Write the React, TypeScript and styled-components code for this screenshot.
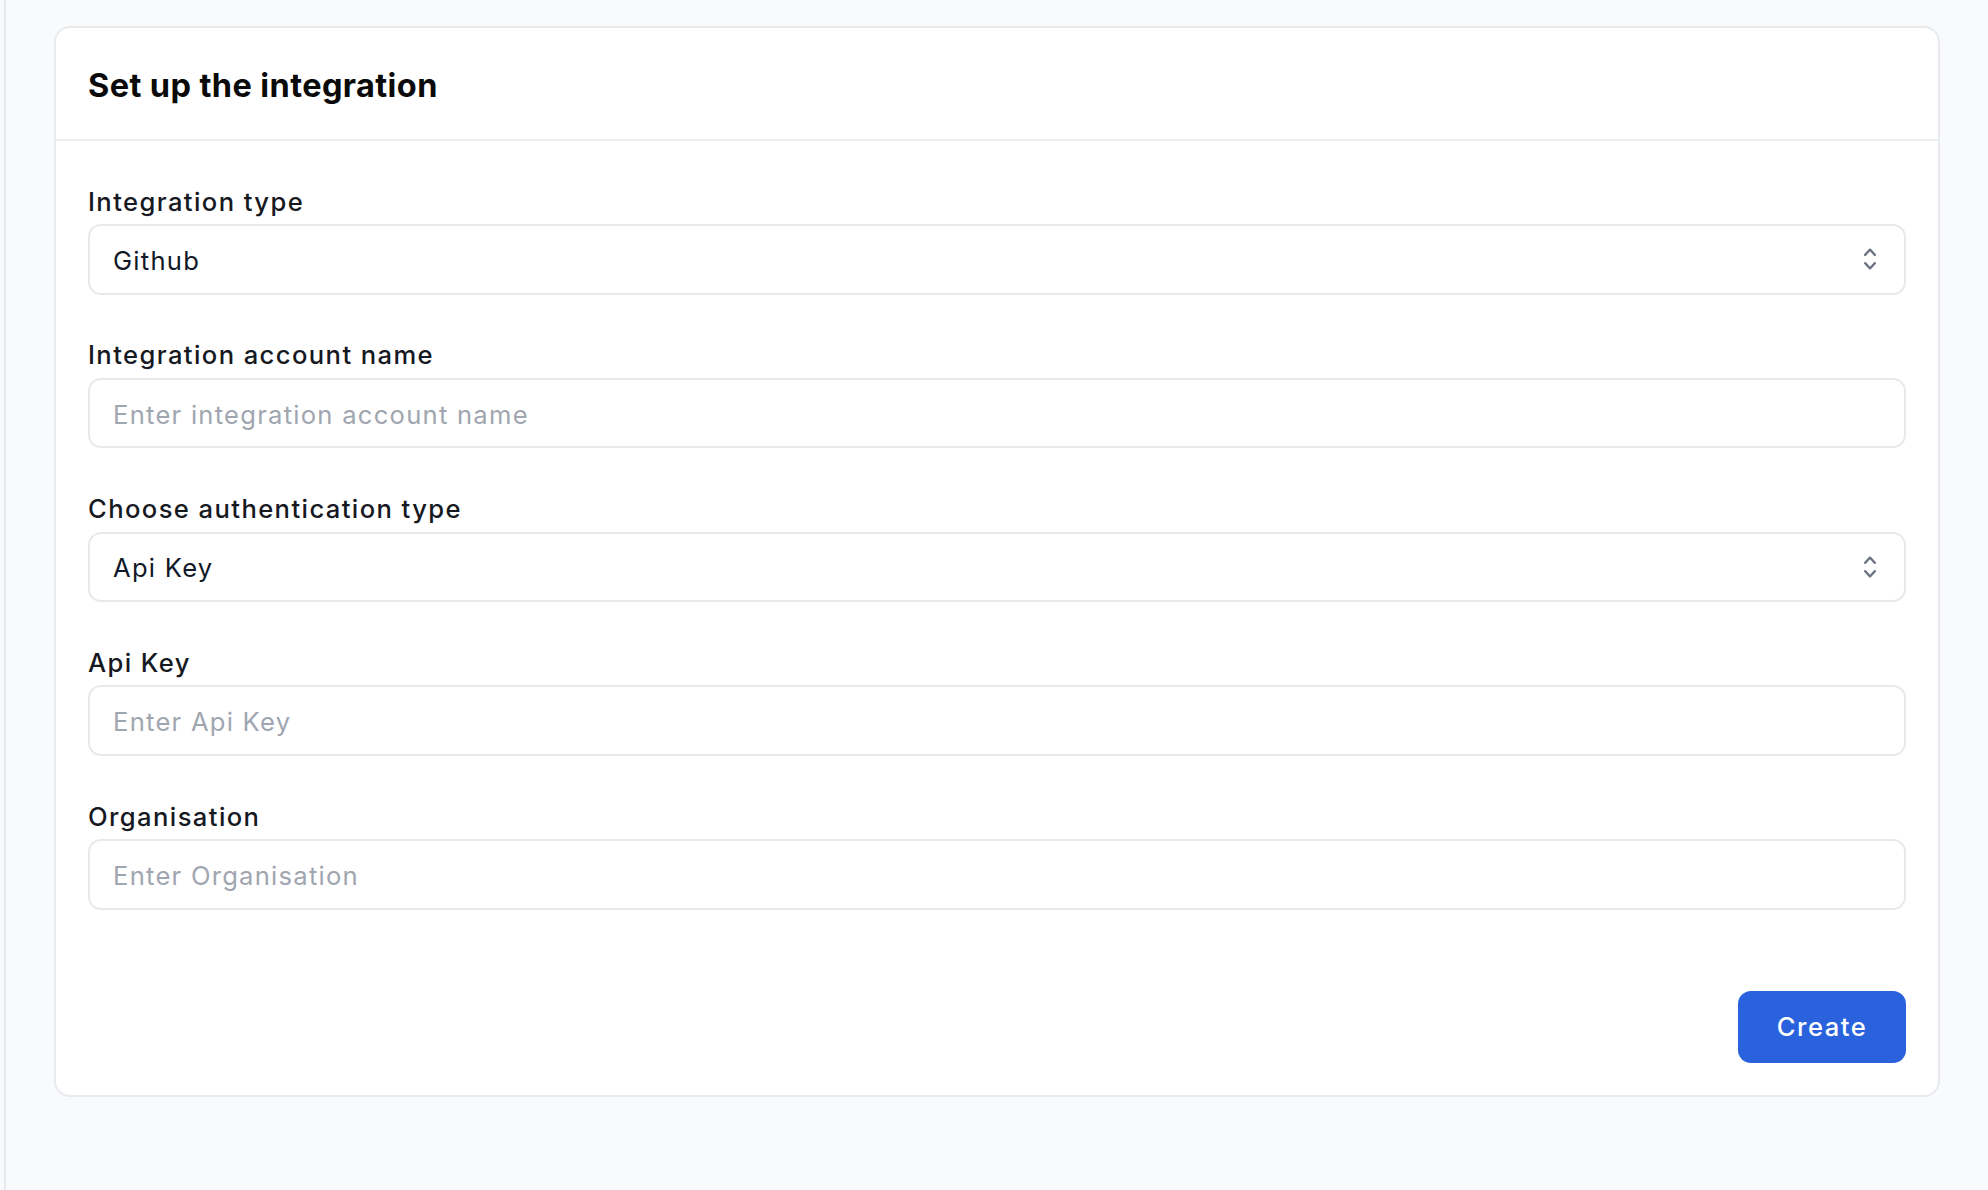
import React from "react";
import styled, { createGlobalStyle } from "styled-components";

const GlobalStyle = createGlobalStyle`
  html, body {
    margin: 0;
    padding: 0;
    background: #f9fafb;
    font-family: Inter, "Noto Sans", "Liberation Sans", sans-serif;
    -webkit-font-smoothing: antialiased;
  }
  * { box-sizing: border-box; }
`;

const Page = styled.div`
  display: flex;
  min-height: 100vh;
  background: #f9fafb;
`;

const Gutter = styled.div`
  width: 4px;
  flex: none;
`;

const Main = styled.main`
  flex: 1;
  border-left: 2px solid #e7e9ed;
  padding: 26px 48px 0 48px;
`;

const Card = styled.section`
  background: #ffffff;
  border: 2px solid #e8eaee;
  border-radius: 16px;
`;

const CardHeader = styled.header`
  padding: 34px 32px 29px 32px;
  border-bottom: 2px solid #eceef1;
`;

const Title = styled.h2`
  margin: 0;
  font-size: 32.5px;
  line-height: 48px;
  font-weight: 700;
  color: #0a0a0a;
  letter-spacing: 0.4px;
`;

const CardBody = styled.div`
  padding: 41.5px 32px 32px 32px;
  display: flex;
  flex-direction: column;
`;

const Fields = styled.div`
  display: flex;
  flex-direction: column;
  gap: 41.8px;
`;

const Field = styled.div`
  display: flex;
  flex-direction: column;
  gap: 3px;
`;

const Label = styled.label`
  font-size: 25.6px;
  line-height: 38.4px;
  font-weight: 450;
  letter-spacing: 1.4px;
  color: #16191f;
`;

const controlBase = `
  height: 70.6px;
  width: 100%;
  border: 2px solid #e7e9ed;
  border-radius: 13px;
  background: #ffffff;
  font-family: Inter, "Noto Sans", "Liberation Sans", sans-serif;
  font-size: 25.6px;
  letter-spacing: 1.25px;
  color: #111827;
  outline: none;
`;

const TextInput = styled.input`
  ${controlBase}
  padding: 2px 23px 0 23px;
  &::placeholder {
    color: #a0a6b0;
  }
`;

const SelectTrigger = styled.button`
  ${controlBase}
  display: flex;
  align-items: center;
  justify-content: space-between;
  padding: 2px 19.5px 0 23px;
  text-align: left;
  cursor: pointer;
`;

const SelectValue = styled.span`
  color: #111827;
`;

const ChevronIcon = styled.svg`
  width: 30px;
  height: 30px;
  flex: none;
  margin-top: -2px;
  color: #6b7280;
`;

const Footer = styled.div`
  display: flex;
  justify-content: flex-end;
  margin-top: 81px;
`;

const PrimaryButton = styled.button`
  height: 72px;
  width: 168px;
  border: none;
  border-radius: 13px;
  background: #2962dc;
  color: #ffffff;
  font-family: Inter, "Noto Sans", "Liberation Sans", sans-serif;
  font-size: 25.6px;
  font-weight: 500;
  letter-spacing: 1.5px;
  cursor: pointer;
`;

const ChevronUpDown = () => (
  <ChevronIcon viewBox="0 0 20 20" fill="currentColor" aria-hidden="true">
    <path
      fillRule="evenodd"
      d="M10 3a.75.75 0 01.55.24l3.25 3.5a.75.75 0 11-1.1 1.02L10 4.852 7.3 7.76a.75.75 0 01-1.1-1.02l3.25-3.5A.75.75 0 0110 3zm-3.76 9.2a.75.75 0 011.06.04l2.7 2.908 2.7-2.908a.75.75 0 111.1 1.02l-3.25 3.5a.75.75 0 01-1.1 0l-3.25-3.5a.75.75 0 01.04-1.06z"
      clipRule="evenodd"
    />
  </ChevronIcon>
);

type FieldDef =
  | { kind: "select"; label: string; value: string }
  | { kind: "text"; label: string; placeholder: string };

const fields: FieldDef[] = [
  { kind: "select", label: "Integration type", value: "Github" },
  { kind: "text", label: "Integration account name", placeholder: "Enter integration account name" },
  { kind: "select", label: "Choose authentication type", value: "Api Key" },
  { kind: "text", label: "Api Key", placeholder: "Enter Api Key" },
  { kind: "text", label: "Organisation", placeholder: "Enter Organisation" },
];

export default function App() {
  return (
    <>
      <GlobalStyle />
      <Page>
        <Gutter />
        <Main>
          <Card>
            <CardHeader>
              <Title>Set up the integration</Title>
            </CardHeader>
            <CardBody>
              <Fields>
                {fields.map((f) => (
                  <Field key={f.label}>
                    <Label>{f.label}</Label>
                    {f.kind === "select" ? (
                      <SelectTrigger type="button">
                        <SelectValue>{f.value}</SelectValue>
                        <ChevronUpDown />
                      </SelectTrigger>
                    ) : (
                      <TextInput placeholder={f.placeholder} />
                    )}
                  </Field>
                ))}
              </Fields>
              <Footer>
                <PrimaryButton type="button">Create</PrimaryButton>
              </Footer>
            </CardBody>
          </Card>
        </Main>
      </Page>
    </>
  );
}
